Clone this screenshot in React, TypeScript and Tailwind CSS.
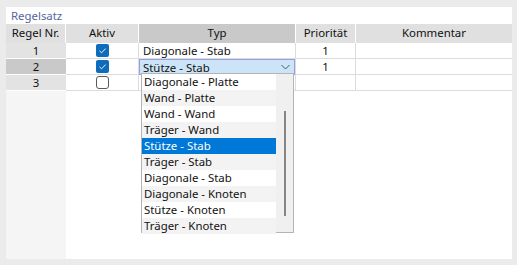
import React from "react";

const items = [
  "Diagonale - Platte",
  "Wand - Platte",
  "Wand - Wand",
  "Träger - Wand",
  "Stütze - Stab",
  "Träger - Stab",
  "Diagonale - Stab",
  "Diagonale - Knoten",
  "Stütze - Knoten",
  "Träger - Knoten",
];

function CheckBox({ checked }: { checked: boolean }) {
  if (!checked) {
    return <div className="h-[13px] w-[13px] rounded-[3px] border border-[#5a5a5a] bg-white" />;
  }
  return (
    <div className="flex h-[13px] w-[13px] items-center justify-center rounded-[2px] bg-[#0f6cbd]">
      <svg width="9" height="9" viewBox="0 0 9 9">
        <path d="M1.5 4.8 L3.6 6.8 L7.5 2.6" fill="none" stroke="#ffffff" strokeWidth="0.9" />
      </svg>
    </div>
  );
}

export default function App() {
  const rows = [
    { nr: "1", active: true, typ: "Diagonale - Stab", prio: "1" },
    { nr: "2", active: true, typ: "Stütze - Stab", prio: "1" },
    { nr: "3", active: false, typ: "", prio: "" },
  ];

  return (
    <div
      className="h-[265px] w-[517px] bg-[#ebebeb] pl-[6px] pt-[7px] text-[11.4px] text-[#111]"
      style={{ fontFamily: '"Noto Sans", "Segoe UI", sans-serif' }}
    >
      <div className="flex h-[252px] w-[506px] flex-col bg-white">
        {/* Title */}
        <div className="h-[17px] pl-[5px] leading-[17px] text-[#56659b]">Regelsatz</div>

        {/* Header */}
        <div className="flex h-[19px] leading-[18px]">
          <div className="w-[60px] border-r border-white bg-[#e0e0e0] text-center">Regel Nr.</div>
          <div className="w-[73px] border-r border-white bg-[#e0e0e0] text-center">Aktiv</div>
          <div className="w-[157px] border-r border-white bg-[#c9c9c9] text-center">Typ</div>
          <div className="w-[60px] border-r border-white bg-[#e0e0e0] text-center">Priorität</div>
          <div className="flex-1 bg-[#e0e0e0] text-center">Kommentar</div>
        </div>

        {/* Body */}
        <div className="flex flex-1">
          <div className="w-[60px] bg-[#f5f5f5]">
            {rows.map((r, i) => (
              <div
                key={r.nr}
                className={`h-[16px] border-b border-white text-center leading-[15px] ${
                  i === 1 ? "bg-[#c9c9c9]" : "bg-[#e3e3e3]"
                }`}
              >
                {r.nr}
              </div>
            ))}
          </div>
          <div className="flex-1">
            {rows.map((r, i) => (
              <div key={r.nr} className="flex h-[16px] border-b border-[#dcdcdc] leading-[15px]">
                <div className="flex w-[73px] items-center justify-center border-r border-[#dcdcdc]">
                  <CheckBox checked={r.active} />
                </div>
                <div className="relative w-[157px] border-r border-[#dcdcdc]">
                  {i === 1 ? (
                    <>
                      <div className="absolute -bottom-px left-0 top-0 flex w-[156px] items-center justify-between border border-[#9c9ce4] bg-[#cce4f7] pl-[3px] pr-[4px]">
                        <span>{r.typ}</span>
                        <svg width="9" height="6" viewBox="0 0 9 6">
                          <path d="M0.5 1 L4.5 5 L8.5 1" fill="none" stroke="#555" strokeWidth="1" />
                        </svg>
                      </div>
                      <div className="absolute left-[2px] top-[14px] z-10 flex h-[160px] w-[153px] border border-[#b4b4b4] bg-white">
                        <div className="flex-1">
                          {items.map((t, k) => (
                            <div
                              key={t}
                              className={`h-[16px] pl-[2px] leading-[16px] ${
                                t === "Stütze - Stab"
                                  ? "bg-[#0078d7] text-white"
                                  : k % 2 === 1
                                  ? "bg-[#f3f3f3]"
                                  : "bg-white"
                              }`}
                            >
                              {t}
                            </div>
                          ))}
                        </div>
                        <div className="w-[17px] bg-[#f0f0f0] pt-[37px]">
                          <div className="ml-[8px] h-[105px] w-[2px] bg-[#858585]" />
                        </div>
                      </div>
                    </>
                  ) : (
                    <div className="pl-[4px]">{r.typ}</div>
                  )}
                </div>
                <div className="w-[60px] border-r border-[#dcdcdc] text-center">{r.prio}</div>
                <div className="flex-1" />
              </div>
            ))}
          </div>
        </div>
      </div>
    </div>
  );
}
